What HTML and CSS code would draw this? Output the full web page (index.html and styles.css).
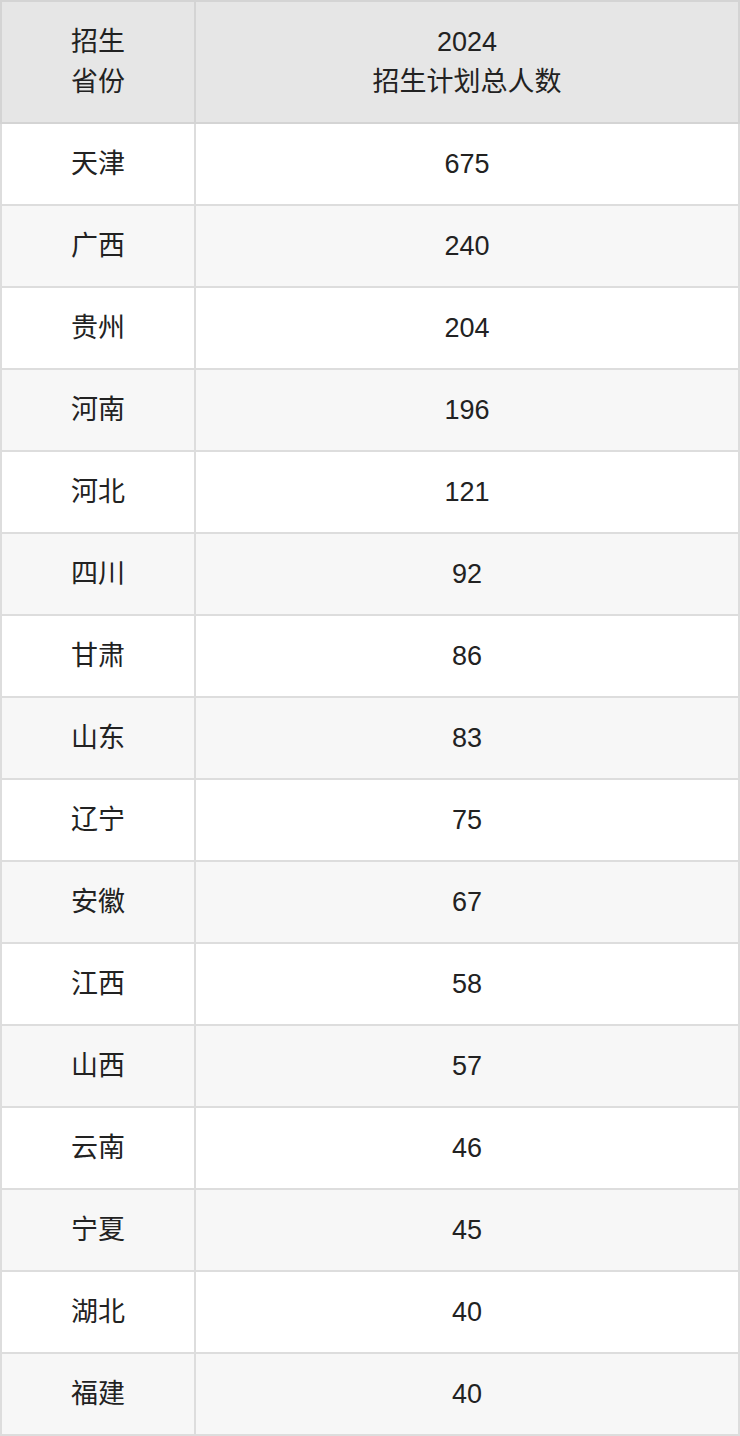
FILE: index.html
```html
<!DOCTYPE html>
<html lang="zh">
<head>
<meta charset="utf-8">
<link rel="stylesheet" href="styles.css">
</head>
<body>
<table class="plan">
  <thead>
    <tr><th class="prov">招生<br>省份</th><th>2024<br>招生计划总人数</th></tr>
  </thead>
  <tbody>
    <tr><td>天津</td><td>675</td></tr>
    <tr><td>广西</td><td>240</td></tr>
    <tr><td>贵州</td><td>204</td></tr>
    <tr><td>河南</td><td>196</td></tr>
    <tr><td>河北</td><td>121</td></tr>
    <tr><td>四川</td><td>92</td></tr>
    <tr><td>甘肃</td><td>86</td></tr>
    <tr><td>山东</td><td>83</td></tr>
    <tr><td>辽宁</td><td>75</td></tr>
    <tr><td>安徽</td><td>67</td></tr>
    <tr><td>江西</td><td>58</td></tr>
    <tr><td>山西</td><td>57</td></tr>
    <tr><td>云南</td><td>46</td></tr>
    <tr><td>宁夏</td><td>45</td></tr>
    <tr><td>湖北</td><td>40</td></tr>
    <tr><td>福建</td><td>40</td></tr>
  </tbody>
</table>
</body>
</html>
```

FILE: styles.css
```css
html, body {
  margin: 0;
  padding: 0;
  background: #ffffff;
}
.plan {
  border-collapse: collapse;
  width: 740px;
  table-layout: fixed;
  font-family: "Liberation Sans", "Noto Sans CJK SC", sans-serif;
  font-size: 27px;
  color: #222222;
}
.plan th, .plan td {
  border: 2px solid #dddddd;
  text-align: center;
  vertical-align: middle;
  padding: 0;
}
.plan th {
  background: #e6e6e6;
  border-color: #d4d4d4;
  font-weight: normal;
  height: 120px;
  line-height: 40px;
}
.plan th.prov {
  width: 192px;
}
.plan td {
  height: 80px;
  line-height: 30px;
}
.plan tbody tr:nth-child(even) td {
  background: #f7f7f7;
}
```
